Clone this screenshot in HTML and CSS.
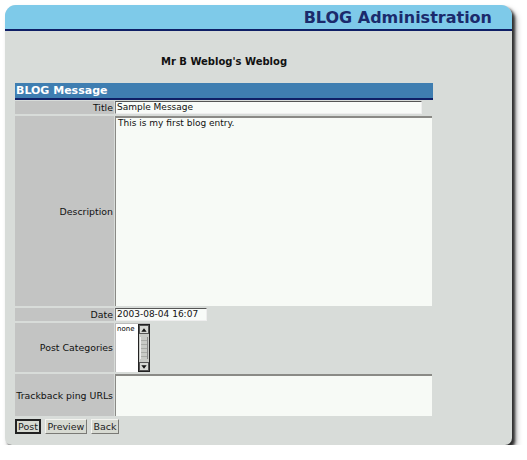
FILE: index.html
```html
<!DOCTYPE html>
<html>
<head>
<meta charset="utf-8">
<link rel="stylesheet" href="styles.css">
</head>
<body>
<div class="window">
  <div class="header"><h1 class="app-title">BLOG Administration</h1></div>
  <div class="content">
    <h2 class="site-title">Mr B Weblog's Weblog</h2>
    <div class="bar">BLOG Message</div>
    <div class="form">
      <div class="label">Title</div>
      <div class="field"><div class="input title-input">Sample Message</div></div>
      <div class="label">Description</div>
      <div class="field"><div class="textarea desc">This is my first blog entry.</div></div>
      <div class="label">Date</div>
      <div class="field"><div class="input date-input">2003-08-04 16:07</div></div>
      <div class="label">Post Categories</div>
      <div class="field">
        <div class="listbox">
          <div class="list-items">none</div>
          <div class="scrollbar">
            <div class="arrow up"><svg width="9" height="8" viewBox="0 0 9 8"><path d="M1.5 6 L4.5 2 L7.5 6 Z" fill="#111"/></svg></div>
            <div class="track"><div class="thumb"></div></div>
            <div class="arrow down"><svg width="9" height="8" viewBox="0 0 9 8"><path d="M1.5 2 L4.5 6 L7.5 2 Z" fill="#111"/></svg></div>
          </div>
        </div>
      </div>
      <div class="label">Trackback ping URLs</div>
      <div class="field"><div class="textarea trackback"></div></div>
    </div>
    <div class="buttons">
      <button class="btn btn-default">Post</button>
      <button class="btn">Preview</button>
      <button class="btn">Back</button>
    </div>
  </div>
</div>
</body>
</html>
```
FILE: styles.css
```css
html, body {
  margin: 0;
  padding: 0;
  background: #ffffff;
}
body {
  font-family: "DejaVu Sans", Verdana, sans-serif;
  color: #111;
}
.window {
  margin: 5px 0 0 5px;
  width: 507px;
  height: 440px;
  background: #d8dcd9;
  border-radius: 11px 11px 7px 7px;
  box-shadow: 3px 3px 3px rgba(0,0,0,0.75), 4px 5px 6px rgba(0,0,0,0.35);
  overflow: hidden;
}
.header {
  height: 24px;
  background: #7ecae9;
  border-bottom: 2px solid #0f1f66;
  display: flex;
  justify-content: flex-end;
  align-items: center;
  padding-right: 20px;
}
.app-title {
  margin: 0;
  font-size: 16px;
  font-weight: bold;
  color: #1b2a6c;
  line-height: 20px;
  padding-top: 2px;
}
.content {
  padding-left: 10px;
  width: 418px;
}
.site-title {
  margin: 24px 0 0 0;
  height: 13px;
  text-align: center;
  font-size: 10px;
  line-height: 13px;
  font-weight: bold;
}
.bar {
  margin-top: 15px;
  height: 15px;
  background: #3f7eb1;
  border-bottom: 2px solid #0f1f66;
  color: #fff;
  font-weight: bold;
  font-size: 11px;
  line-height: 15px;
  padding-left: 1px;
}
.form {
  margin-top: 1px;
  display: grid;
  grid-template-columns: 99px 318px;
  grid-template-rows: 13px 190px 13px 49px 42px;
  column-gap: 1px;
  row-gap: 2px;
}
.label {
  background: #c3c4c3;
  font-size: 9.4px;
  display: flex;
  align-items: center;
  justify-content: flex-end;
  padding-right: 1px;
}
.field {
  display: flex;
  align-items: flex-start;
}
.input {
  height: 11px;
  background: #f8fbf8;
  border-top: 1px solid #555;
  border-left: 1px solid #777;
  border-bottom: 1px solid #eee;
  border-right: 1px solid #eee;
  font-size: 9px;
  line-height: 11px;
  padding-left: 1px;
  box-sizing: content-box;
}
.title-input { width: 304px; }
.date-input { width: 89px; }
.textarea {
  background: #f7faf6;
  border-top: 2px solid #8a8a86;
  border-left: 1px solid #8a8a86;
  font-size: 9px;
  line-height: 11px;
  padding: 0 2px;
  box-sizing: border-box;
  width: 317px;
}
.desc { height: 190px; }
.trackback { height: 42px; }
.listbox {
  width: 35px;
  height: 49px;
  background: #fff;
  border-top: 1px solid #bbb;
  border-left: 1px solid #bbb;
  box-sizing: border-box;
  display: flex;
}
.list-items {
  flex: 1;
  font-size: 7px;
  line-height: 9px;
  padding: 1px 0 0 1px;
  color: #000;
}
.scrollbar {
  width: 12px;
  display: flex;
  flex-direction: column;
  border: 1px solid #222;
  box-sizing: border-box;
  background: #b8bab6;
}
.arrow {
  height: 9px;
  background: #d6d8d4;
  border: 1px solid #555;
  box-sizing: border-box;
  display: flex;
  align-items: center;
  justify-content: center;
}
.arrow svg { display: block; }
.track {
  flex: 1;
  background: #c8cac6;
  display: flex;
  align-items: center;
  justify-content: center;
}
.thumb {
  width: 8px;
  height: 22px;
  border-left: 1px solid #eee;
  border-right: 1px solid #888;
  box-sizing: border-box;
  background: repeating-linear-gradient(#c8cac6 0 3px, #a9aba7 3px 4px);
}
.buttons {
  margin-top: 3px;
  display: flex;
  gap: 4px;
}
.btn {
  font-family: "DejaVu Sans", Verdana, sans-serif;
  font-size: 9.5px;
  height: 15px;
  line-height: 11px;
  padding: 0 1.5px;
  background: #d7dad2;
  color: #222;
  border: 1px solid;
  border-color: #f4f4f0 #7a7a76 #7a7a76 #f4f4f0;
  border-radius: 0;
  margin: 0;
}
.btn-default {
  border: 2px solid #222;
  padding: 0 1px;
}
```
